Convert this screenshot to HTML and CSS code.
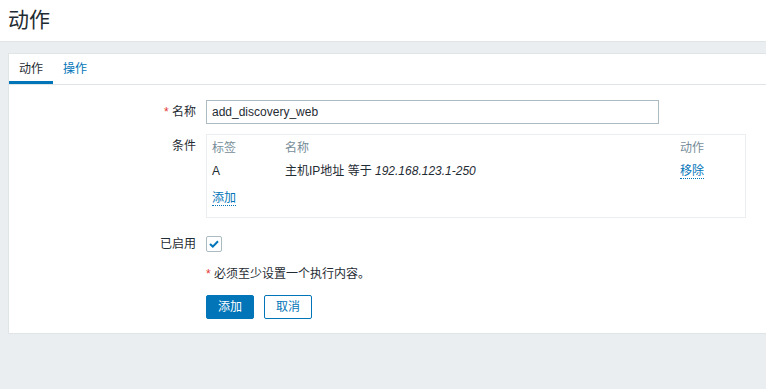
FILE: index.html
```html
<!DOCTYPE html>
<html lang="zh-CN">
<head>
<meta charset="utf-8">
<title>动作</title>
<link rel="stylesheet" href="styles.css">
</head>
<body>
<header class="page-header">
  <h1 class="page-title">动作</h1>
</header>
<main class="page-body">
  <section class="card">
    <nav class="tabs">
      <span class="tab tab-active">动作</span>
      <a class="tab" href="#">操作</a>
    </nav>
    <form class="form">
      <div class="form-row row-name">
        <label class="form-label"><span class="req">*</span> 名称</label>
        <div class="form-field"><input class="text-input" type="text" value="add_discovery_web"></div>
      </div>
      <div class="form-row row-cond">
        <label class="form-label label-top">条件</label>
        <div class="form-field">
          <div class="cond-box">
            <div class="cond-row cond-head">
              <span class="col-tag">标签</span>
              <span class="col-name">名称</span>
              <span class="col-act">动作</span>
            </div>
            <div class="cond-row cond-data">
              <span class="col-tag">A</span>
              <span class="col-name">主机IP地址 等于 <em>192.168.123.1-250</em></span>
              <span class="col-act"><a class="link" href="#">移除</a></span>
            </div>
            <div class="cond-add"><a class="link" href="#">添加</a></div>
          </div>
        </div>
      </div>
      <div class="form-row row-enabled">
        <label class="form-label">已启用</label>
        <div class="form-field">
          <span class="checkbox">
            <svg width="10" height="8" viewBox="0 0 10 8"><path d="M1 4 L3.8 6.6 L9 1.2" fill="none" stroke="#0275b8" stroke-width="2"/></svg>
          </span>
        </div>
      </div>
      <div class="form-row row-note">
        <div class="form-label"></div>
        <div class="form-field note"><span class="req">*</span> 必须至少设置一个执行内容。</div>
      </div>
      <div class="form-row row-buttons">
        <div class="form-label"></div>
        <div class="form-field buttons">
          <button type="button" class="btn btn-primary">添加</button>
          <button type="button" class="btn btn-alt">取消</button>
        </div>
      </div>
    </form>
  </section>
</main>
</body>
</html>
```

FILE: styles.css
```css
html, body {
  margin: 0;
  padding: 0;
}
body {
  background: #ebeef0;
  color: #1f2c33;
  font-family: "Liberation Sans", "Noto Sans CJK SC", Arial, sans-serif;
  font-size: 12px;
  line-height: 14px;
  height: 389px;
  overflow: hidden;
}
.page-header {
  background: #ffffff;
  height: 41px;
  border-bottom: 1px solid #dfe4e7;
  display: flex;
  align-items: center;
  padding-left: 8px;
}
.page-title {
  margin: 0;
  font-size: 21px;
  font-weight: normal;
  line-height: 24px;
  color: #1f2c33;
  margin-top: -1px;
}
.page-body {
  padding: 11px 0 0 8px;
}
.card {
  background: #ffffff;
  border-left: 1px solid #dfe4e7;
  border-bottom: 1px solid #dfe4e7;
  border-top: 1px solid #dfe4e7;
  height: 279px;
}
.tabs {
  display: flex;
  height: 30px;
  border-bottom: 1px solid #dfe4e7;
}
.tab {
  display: flex;
  align-items: center;
  padding: 0 10px;
  color: #0275b8;
  text-decoration: none;
  height: 30px;
  box-sizing: border-box;
  padding-top: 0;
}
.tab-active {
  color: #1f2c33;
  border-bottom: 3px solid #0275b8;
  padding-top: 3px;
}
.form {
  padding-top: 15px;
}
.form-row {
  display: grid;
  grid-template-columns: 187px 1fr;
  column-gap: 10px;
}
.form-label {
  text-align: right;
  align-self: center;
}
.label-top {
  align-self: start;
  padding-top: 5px;
}
.req {
  color: #e33734;
}
.text-input {
  box-sizing: border-box;
  width: 453px;
  height: 24px;
  border: 1px solid #acbbc2;
  padding: 0 5px;
  font-family: "Liberation Sans", "Noto Sans CJK SC", Arial, sans-serif;
  font-size: 12px;
  color: #1f2c33;
  margin: 0;
  outline: none;
}
.row-cond {
  margin-top: 10px;
}
.cond-box {
  box-sizing: border-box;
  width: 540px;
  height: 84px;
  border: 1px solid #ebeef0;
  padding: 5px;
}
.cond-row {
  display: flex;
}
.col-tag {
  width: 73px;
}
.col-name {
  flex: 1;
}
.col-act {
  width: 60px;
}
.cond-head {
  height: 18px;
  color: #768d99;
  line-height: 14px;
  padding-top: 1px;
  box-sizing: border-box;
}
.cond-data {
  height: 24px;
  align-items: center;
  padding-top: 1px;
  box-sizing: border-box;
}
.cond-data em {
  font-style: italic;
}
.cond-add {
  padding-top: 9px;
}
.link {
  color: #0275b8;
  text-decoration: none;
  border-bottom: 1px dotted #0275b8;
}
.row-enabled {
  margin-top: 18px;
}
.checkbox {
  box-sizing: border-box;
  display: flex;
  align-items: center;
  justify-content: center;
  width: 16px;
  height: 16px;
  border: 1px solid #acbbc2;
  border-radius: 2px;
  background: #fff;
}
.row-note {
  margin-top: 15px;
}
.note {
  height: 14px;
}
.row-buttons {
  margin-top: 14px;
}
.buttons {
  display: flex;
  gap: 10px;
}
.btn {
  box-sizing: border-box;
  height: 24px;
  width: 48px;
  padding: 0;
  border-radius: 2px;
  font-family: "Liberation Sans", "Noto Sans CJK SC", Arial, sans-serif;
  font-size: 12px;
  line-height: 14px;
  cursor: pointer;
}
.btn-primary {
  background: #0275b8;
  border: 1px solid #0275b8;
  color: #ffffff;
}
.btn-alt {
  background: #ffffff;
  border: 1px solid #0275b8;
  color: #0275b8;
}
```
